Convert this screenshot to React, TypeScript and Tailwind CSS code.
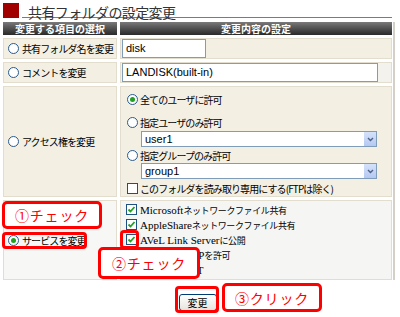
import React from "react";

const JP = "font-['Noto_Sans_CJK_JP',sans-serif]";

function Radio({ checked = false }: { checked?: boolean }) {
  return (
    <span className="inline-flex w-[11px] h-[11px] rounded-full border border-[#2a5b8e] bg-white items-center justify-center shrink-0">
      {checked && <span className="w-[5px] h-[5px] rounded-full bg-[#21a121]" />}
    </span>
  );
}

function Check({ checked = false }: { checked?: boolean }) {
  return (
    <span className="inline-flex w-[11px] h-[11px] border border-[#1c5180] bg-white items-center justify-center shrink-0">
      {checked && (
        <svg width="9" height="9" viewBox="0 0 9 9">
          <path d="M1.5 4.5 L3.5 6.5 L7.5 2" stroke="#21a121" strokeWidth="1.8" fill="none" />
        </svg>
      )}
    </span>
  );
}

function Select({ value }: { value: string }) {
  return (
    <div className="ml-[14px] w-[236px] h-[16px] border border-[#7f9db9] bg-white flex items-stretch">
      <span className="flex-1 pl-[3px] text-[11px] leading-[14px] font-['Liberation_Sans',sans-serif] text-black">{value}</span>
      <span className="w-[12px] bg-gradient-to-b from-[#d6e2fb] to-[#b4c8f2] flex items-center justify-center">
        <svg width="7" height="5" viewBox="0 0 7 5">
          <path d="M1 1 L3.5 3.5 L6 1" stroke="#4d6185" strokeWidth="1.4" fill="none" />
        </svg>
      </span>
    </div>
  );
}

function Label({ children }: { children: React.ReactNode }) {
  return <span className={`${JP} text-[10px] tracking-[-0.9px] leading-[15px] text-black`}>{children}</span>;
}

function SvcLine({ latin, jp, checked = true }: { latin?: string; jp?: string; checked?: boolean }) {
  return (
    <div className="h-[15px] flex items-center gap-[3px]">
      <Check checked={checked} />
      <span className="whitespace-nowrap leading-[15px]">
        {latin && <span className="font-['Liberation_Serif',serif] text-[11px] text-black">{latin}</span>}
        {jp && <span className={`${JP} text-[9px] tracking-[-0.4px] text-black`}>{jp}</span>}
      </span>
    </div>
  );
}

export default function App() {
  const cellL = "bg-[#f4efe3] border border-[#e2ddcc] flex items-center gap-[3px] pl-[4px]";
  const cellR = "bg-[#f4efe3] border border-[#e2ddcc]";
  return (
    <div className="w-[400px] h-[317px] bg-white relative overflow-hidden">
      {/* title */}
      <div className="flex items-start h-[22px]">
        <div className="ml-[3px] mt-[3px] w-[16px] h-[15px] bg-[#a00000]" />
        <div className="ml-[3px] w-[370px] h-[18px] border-b border-[#c85a5a] pl-[6px]">
          <span className={`${JP} text-[14px] leading-[16px] tracking-[-0.6px] text-[#333]`}>共有フォルダの設定変更</span>
        </div>
      </div>

      {/* table */}
      <div className="flex">
        <div className="ml-[3px] w-[389px] grid grid-cols-[114px_272px] gap-[3px] bg-white">
          <div className="h-[13px] bg-gradient-to-b from-[#7a7a7a] to-[#2a2a2a] flex items-center justify-center">
            <span className={`${JP} text-[10px] font-bold text-white leading-[12px]`}>変更する項目の選択</span>
          </div>
          <div className="h-[13px] bg-gradient-to-b from-[#7a7a7a] to-[#2a2a2a] flex items-center justify-center">
            <span className={`${JP} text-[10px] font-bold text-white leading-[12px]`}>変更内容の設定</span>
          </div>

          {/* row 1 */}
          <div className={`h-[21px] ${cellL}`}>
            <Radio />
            <Label>共有フォルダ名を変更</Label>
          </div>
          <div className={`h-[21px] ${cellR} flex items-center pl-[1px]`}>
            <div className="w-[84px] h-[19px] border border-[#7f9db9] bg-white flex items-center pl-[3px]">
              <span className="text-[11px] font-['Liberation_Sans',sans-serif] text-black">disk</span>
            </div>
          </div>

          {/* row 2 */}
          <div className={`h-[21px] ${cellL}`}>
            <Radio />
            <Label>コメントを変更</Label>
          </div>
          <div className="h-[21px] bg-[#f4f2ec] border border-[#e2ddcc] flex items-center pl-[1px]">
            <div className="w-[256px] h-[19px] border border-[#7f9db9] bg-white flex items-center pl-[3px]">
              <span className="text-[11px] font-['Liberation_Sans',sans-serif] text-black">LANDISK(built-in)</span>
            </div>
          </div>

          {/* row 3 */}
          <div className={`h-[111px] ${cellL}`}>
            <Radio />
            <Label>アクセス権を変更</Label>
          </div>
          <div className={`h-[111px] ${cellR} flex flex-col pl-[6px] pt-[5px]`}>
            <div className="h-[15px] flex items-center gap-[2px]">
              <Radio checked />
              <Label>全てのユーザに許可</Label>
            </div>
            <div className="mt-[8px] h-[15px] flex items-center gap-[2px]">
              <Radio />
              <Label>指定ユーザのみ許可</Label>
            </div>
            <div className="mt-[1px]">
              <Select value="user1" />
            </div>
            <div className="mt-[1px] h-[15px] flex items-center gap-[2px]">
              <Radio />
              <Label>指定グループのみ許可</Label>
            </div>
            <div>
              <Select value="group1" />
            </div>
            <div className="mt-[2px] h-[15px] flex items-center gap-[2px]">
              <Check />
              <Label>このフォルダを読み取り専用にする(FTPは除く)</Label>
            </div>
          </div>

          {/* row 4 */}
          <div className="h-[80px] bg-[#f7f7f5] border border-[#e2ddcc] flex items-center gap-[3px] pl-[4px]">
            <Radio checked />
            <Label>サービスを変更</Label>
          </div>
          <div className="h-[80px] bg-[#f5f5f3] border border-[#e2ddcc] flex flex-col pl-[5px] pt-[1px]">
            <SvcLine latin="Microsoft" jp="ネットワークファイル共有" />
            <SvcLine latin="AppleShare" jp="ネットワークファイル共有" />
            <SvcLine latin="AVeL Link Server" jp="に公開" />
            <SvcLine latin="WebDAV/FTP" jp="を許可" />
            <SvcLine latin="DLNA NAT-T" />
          </div>
        </div>
        <div className="ml-[1px] w-[2px] bg-[#d4d0c8]" />
      </div>

      {/* button */}
      <div className="w-[395px] flex justify-center mt-[14px]">
        <button className="w-[38px] h-[17px] rounded-[3px] border border-[#003c74] bg-gradient-to-b from-white to-[#e6e4dc] flex items-center justify-center">
          <span className={`${JP} text-[10px] text-black leading-[12px]`}>変更</span>
        </button>
      </div>

      {/* callouts */}
      <div className="absolute left-[2px] top-[201px] w-[100px] h-[28px] border-[3px] border-[#ff0000] rounded-[5px] bg-white flex items-center justify-center">
        <span className={`${JP} text-[14px] tracking-[0.8px] text-[#ff0000] leading-[16px]`}>①チェック</span>
      </div>
      <div className="absolute left-[2px] top-[232px] w-[85px] h-[17px] border-[3px] border-[#ff0000] rounded-[4px]" />
      <div className="absolute left-[120px] top-[230px] w-[19px] h-[19px] border-[3px] border-[#ff0000] rounded-[4px]" />
      <div className="absolute left-[98px] top-[247px] w-[102px] h-[32px] border-[3px] border-[#ff0000] rounded-[5px] bg-white flex items-center justify-center">
        <span className={`${JP} text-[14px] tracking-[0.8px] text-[#ff0000] leading-[16px]`}>②チェック</span>
      </div>
      <div className="absolute left-[175px] top-[286px] w-[44px] h-[27px] border-[3px] border-[#ff0000] rounded-[4px]" />
      <div className="absolute left-[222px] top-[283px] w-[100px] h-[29px] border-[3px] border-[#ff0000] rounded-[5px] bg-white flex items-center justify-center">
        <span className={`${JP} text-[14px] tracking-[0.8px] text-[#ff0000] leading-[16px]`}>③クリック</span>
      </div>
    </div>
  );
}
